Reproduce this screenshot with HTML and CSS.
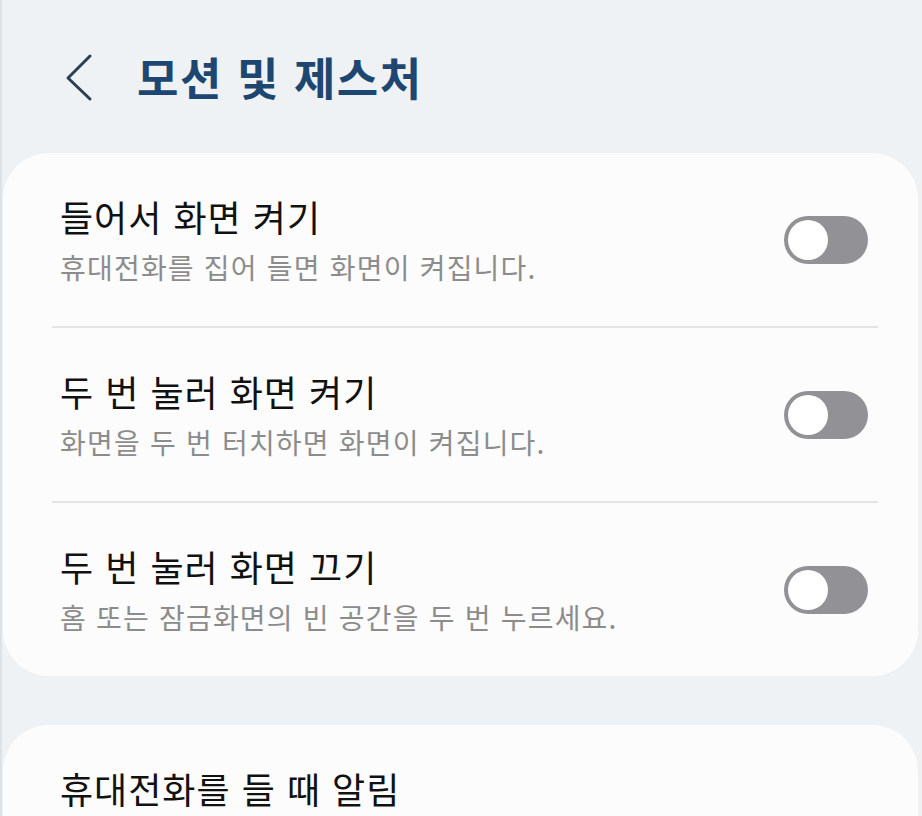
FILE: index.html
```html
<!DOCTYPE html>
<html lang="ko">
<head>
<meta charset="utf-8">
<link rel="stylesheet" href="styles.css">
</head>
<body>
<div class="screen">
  <header class="header">
    <svg class="back" width="30" height="50" viewBox="0 0 30 50"><polyline points="25,4 3,26 25,47" fill="none" stroke="#2a3f55" stroke-width="3" stroke-linecap="round" stroke-linejoin="round"/></svg>
    <h1 class="title">모션 및 제스처</h1>
  </header>
  <section class="card">
    <div class="row">
      <div class="text">
        <div class="label">들어서 화면 켜기</div>
        <div class="desc">휴대전화를 집어 들면 화면이 켜집니다.</div>
      </div>
      <div class="toggle"><span class="thumb"></span></div>
    </div>
    <div class="divider"></div>
    <div class="row">
      <div class="text">
        <div class="label">두 번 눌러 화면 켜기</div>
        <div class="desc">화면을 두 번 터치하면 화면이 켜집니다.</div>
      </div>
      <div class="toggle"><span class="thumb"></span></div>
    </div>
    <div class="divider"></div>
    <div class="row">
      <div class="text">
        <div class="label">두 번 눌러 화면 끄기</div>
        <div class="desc">홈 또는 잠금화면의 빈 공간을 두 번 누르세요.</div>
      </div>
      <div class="toggle"><span class="thumb"></span></div>
    </div>
  </section>
  <section class="card card2">
    <div class="row row-top">
      <div class="text">
        <div class="label">휴대전화를 들 때 알림</div>
      </div>
    </div>
  </section>
</div>
</body>
</html>
```
FILE: styles.css
```css
html, body {
  margin: 0;
  padding: 0;
  background: #eef2f5;
  font-family: "Noto Sans CJK KR", "Noto Sans", sans-serif;
}
.screen {
  width: 922px;
  height: 816px;
  overflow: hidden;
  box-sizing: border-box;
  border-left: 2px solid #dde2e7;
  padding: 0 4px 0 1px;
}
.header {
  height: 153px;
  box-sizing: border-box;
  display: flex;
  align-items: center;
  padding: 0 0 0 62px;
}
.back {
  display: block;
  margin-right: 42px;
}
.title {
  margin: 0;
  font-size: 45px;
  font-weight: 700;
  color: #1d4770;
  letter-spacing: 1.5px;
}
.card {
  background: #fcfcfc;
  border-radius: 46px;
  padding: 0 50px 0 57px;
}
.card2 {
  margin-top: 49px;
  padding-right: 40px;
}
.row {
  height: 173px;
  box-sizing: border-box;
  display: flex;
  align-items: center;
  justify-content: space-between;
}
.row-top {
  align-items: flex-start;
  padding-top: 42px;
}
.text {
  display: flex;
  flex-direction: column;
  gap: 10px;
  margin-top: -2px;
}
.label {
  font-size: 36px;
  line-height: 46px;
  color: #111111;
  letter-spacing: 1px;
}
.desc {
  font-size: 28px;
  line-height: 36px;
  color: #8c8c8c;
  letter-spacing: 1.2px;
}
.divider {
  height: 2px;
  background: #e4e4e4;
  margin-left: -8px;
  margin-right: -10px;
}
.toggle {
  width: 84px;
  height: 48px;
  border-radius: 24px;
  background: #929296;
  display: flex;
  align-items: center;
  padding-left: 4px;
  box-sizing: border-box;
}
.thumb {
  width: 40px;
  height: 40px;
  border-radius: 50%;
  background: #ffffff;
  display: block;
}
```
